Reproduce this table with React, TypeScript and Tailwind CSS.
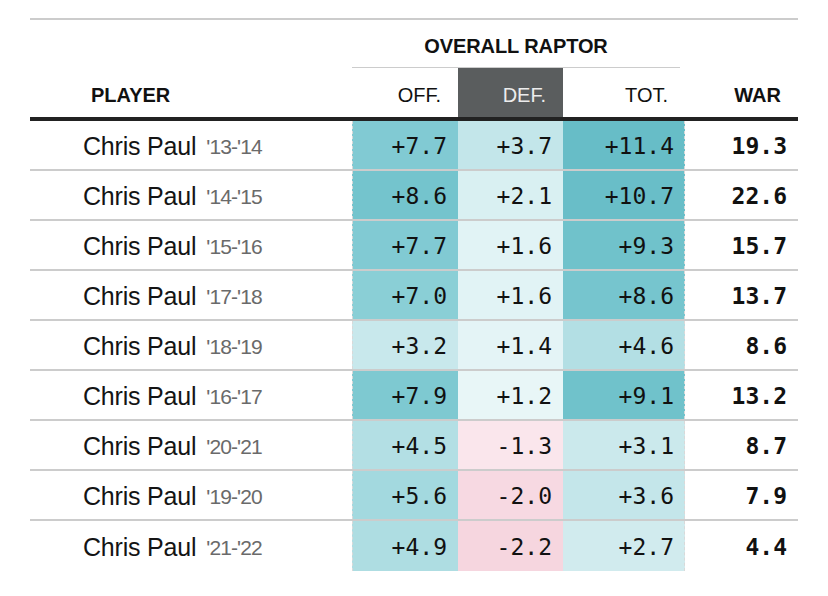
import React from "react";

type Row = {
  year: string;
  off: string;
  def: string;
  tot: string;
  war: string;
  offBg: string;
  defBg: string;
  totBg: string;
};

const rows: Row[] = [
  { year: "'13-'14", off: "+7.7", def: "+3.7", tot: "+11.4", war: "19.3", offBg: "bg-[#81cad3]", defBg: "bg-[#c3e6ea]", totBg: "bg-[#67bdc7]" },
  { year: "'14-'15", off: "+8.6", def: "+2.1", tot: "+10.7", war: "22.6", offBg: "bg-[#74c4cd]", defBg: "bg-[#d9f0f2]", totBg: "bg-[#69bec8]" },
  { year: "'15-'16", off: "+7.7", def: "+1.6", tot: "+9.3", war: "15.7", offBg: "bg-[#81cad3]", defBg: "bg-[#e1f3f5]", totBg: "bg-[#70c2cb]" },
  { year: "'17-'18", off: "+7.0", def: "+1.6", tot: "+8.6", war: "13.7", offBg: "bg-[#8acfd6]", defBg: "bg-[#e1f3f5]", totBg: "bg-[#76c5ce]" },
  { year: "'18-'19", off: "+3.2", def: "+1.4", tot: "+4.6", war: "8.6", offBg: "bg-[#c8e8ec]", defBg: "bg-[#e4f4f6]", totBg: "bg-[#b3dfe4]" },
  { year: "'16-'17", off: "+7.9", def: "+1.2", tot: "+9.1", war: "13.2", offBg: "bg-[#7ec9d1]", defBg: "bg-[#e8f6f7]", totBg: "bg-[#70c2cb]" },
  { year: "'20-'21", off: "+4.5", def: "-1.3", tot: "+3.1", war: "8.7", offBg: "bg-[#b3dfe4]", defBg: "bg-[#fae6ec]", totBg: "bg-[#cbe9ec]" },
  { year: "'19-'20", off: "+5.6", def: "-2.0", tot: "+3.6", war: "7.9", offBg: "bg-[#a3d9df]", defBg: "bg-[#f7d9e2]", totBg: "bg-[#c4e6ea]" },
  { year: "'21-'22", off: "+4.9", def: "-2.2", tot: "+2.7", war: "4.4", offBg: "bg-[#aedde2]", defBg: "bg-[#f6d6df]", totBg: "bg-[#d1ebee]" },
];

const sans = "font-['Liberation_Sans',Arial,sans-serif]";
const mono = "font-['DejaVu_Sans_Mono',monospace]";

export default function App() {
  return (
    <div className="w-[828px] h-[596px] bg-white pt-[18px] pl-[30px]">
      <div className={`w-[768px] ${sans} text-[#111]`}>
        <div className="h-[2px] bg-[#cccccc]" />
        {/* group header */}
        <div className="flex h-[48px]">
          <div className="w-[322px]" />
          <div className="w-[328px] flex items-center justify-center border-b border-[#cccccc] text-[20px] font-bold tracking-[-0.1px] pt-[4px]">
            OVERALL RAPTOR
          </div>
        </div>
        {/* sub header */}
        <div className="flex h-[49px] text-[20px]">
          <div className="w-[322px] flex items-center pl-[61px] font-bold pt-[4px]">PLAYER</div>
          <div className="w-[106px] flex items-center justify-end pr-[17px] pt-[4px]">OFF.</div>
          <div className="w-[105px] flex items-center justify-end pr-[17px] bg-[#5a5d5e] text-[#ececec] pt-[4px]">DEF.</div>
          <div className="w-[122px] flex items-center justify-end pr-[17px] pt-[4px]">TOT.</div>
          <div className="w-[113px] flex items-center justify-end pr-[17px] font-bold pt-[4px]">WAR</div>
        </div>
        <div className="h-[4px] bg-[#222222]" />
        {rows.map((r, i) => (
          <div
            key={i}
            className={`flex h-[50px] ${i < rows.length - 1 ? "border-b-2 border-[#cccccc]" : ""}`}
          >
            <div className="w-[322px] flex items-center pl-[53px] pt-[3px] text-[25px] tracking-[-0.2px]">
              <span className="text-[#141414]">Chris Paul</span>
              <span className="ml-[10px] text-[21px] text-[#6a6a6a] tracking-[-0.9px]">{r.year}</span>
            </div>
            <div className={`w-[106px] flex items-center justify-end pr-[11px] pt-[3px] ${mono} text-[23px] text-[#111] border-l border-dashed border-[#d9d9d9] ${r.offBg}`}>
              {r.off}
            </div>
            <div className={`w-[105px] flex items-center justify-end pr-[11px] pt-[3px] ${mono} text-[23px] text-[#111] ${r.defBg}`}>
              {r.def}
            </div>
            <div className={`w-[122px] flex items-center justify-end pr-[10px] pt-[3px] ${mono} text-[23px] text-[#111] border-r border-dashed border-[#d9d9d9] ${r.totBg}`}>
              {r.tot}
            </div>
            <div className={`w-[113px] flex items-center justify-end pr-[11px] pt-[3px] ${mono} text-[23px] font-bold text-[#111]`}>
              {r.war}
            </div>
          </div>
        ))}
      </div>
    </div>
  );
}
